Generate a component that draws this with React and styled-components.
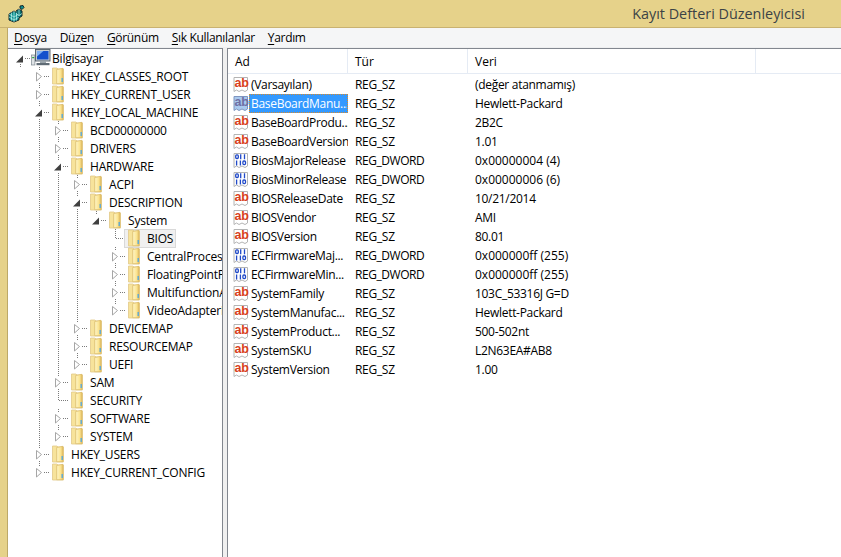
import React from 'react';
import styled, { createGlobalStyle } from 'styled-components';

const Global = createGlobalStyle`
  html, body { margin: 0; padding: 0; background: #e6d28a; }
  body { font-family: "Open Sans", "Noto Sans", "Liberation Sans", sans-serif; }
`;

const Window = styled.div`
  width: 841px; height: 557px; overflow: hidden;
  display: flex; flex-direction: column;
  background: #e6d28a;
`;
const TitleBar = styled.header`
  height: 27px; flex: none; display: flex; align-items: center; justify-content: space-between;
  padding: 0 36px 0 8px; border-bottom: 1px solid #c9b271;
  color: #3b4346; font-size: 14.4px;
`;
const Client = styled.div`
  flex: 1; min-height: 0; margin-left: 7px; display: flex; flex-direction: column;
  background: #f0f0f0; border-left: 1px solid #bda968;
`;
const MenuBar = styled.nav`
  height: 19px; flex: none; display: flex; align-items: center; gap: 13px;
  padding-left: 6px; background: #f5f6f7; color: #000; font-size: 12px; letter-spacing: -0.32px;
  border-bottom: 1px solid #eeeff0;
`;
const MenuItem = styled.span`
  u { text-underline-offset: 2px; text-decoration-thickness: 1px; }
`;
const Panes = styled.div`
  flex: 1; min-height: 0; display: flex; gap: 4px;
`;
const TreePane = styled.div`
  width: 214px; flex: none; background: #fff; overflow: hidden;
  border-top: 1px solid #82878f; border-right: 1px solid #82878f;
`;
const ListPane = styled.div`
  flex: 1; min-width: 0; background: #fff; overflow: hidden;
  border-top: 1px solid #82878f; border-left: 1px solid #82878f;
`;
const TreeRow = styled.div`
  height: 18px; display: flex; align-items: center; padding-left: 4px;
  font-size: 12px; letter-spacing: -0.2px; color: #000; white-space: nowrap;
`;
const TreeLabel = styled.span`
  margin-left: 1px;
`;
const Node = styled.div`
  display: flex; align-items: center; height: 18px;
  ${p => p.$selected && `
    background: #f0f0f0; box-shadow: inset 0 0 0 1px #d9d9d9;
    height: 19px; margin-left: -2px; padding-left: 2px; padding-right: 3px;
  `}
`;
const Header = styled.div`
  height: 24px; display: flex; border-bottom: 1px solid #e5ebf4; background: #fff;
  font-size: 12px; color: #000;
`;
const HeaderCell = styled.div`
  width: ${p => p.$w}px; flex: none; padding-left: 7px; display: flex; align-items: center;
  box-sizing: border-box; border-right: 1px solid #e5ebf4;
`;
const Rows = styled.div`padding-top: 1px;`;
const Row = styled.div`
  height: 19px; display: flex; align-items: center; font-size: 12px; letter-spacing: -0.3px;
  color: #000; white-space: nowrap;
`;
const NameCell = styled.div`
  width: 120px; flex: none; display: flex; align-items: center; padding-left: 5px; box-sizing: border-box;
`;
const Name = styled.span`
  width: 99px; height: 19px; line-height: 17px; box-sizing: border-box; padding: 1px 0 0 2px;
  overflow: hidden; flex: none;
  ${p => p.$selected && `
    background: #3399ff; color: #fff; border: 1px dotted #d98a2b; padding: 0 0 0 1px; line-height: 17px;
  `}
`;
const TypeCell = styled.div`
  width: 120px; flex: none; padding-left: 7px; box-sizing: border-box;
  letter-spacing: ${p => (p.$wide ? '-0.45px' : '-0.3px')};
  margin-top: -1px;
`;
const DataCell = styled.div`
  flex: 1; padding-left: 7px; margin-top: -1px;
  letter-spacing: ${p => (p.$num ? '0' : '-0.3px')};
`;
const IconBox = styled.svg`flex: none; display: block;`;
const IconLetters = styled.text`
  font-family: "Liberation Sans", sans-serif; font-weight: 700; font-size: 12.5px; letter-spacing: -0.2px;
`;

const AppIcon = () => (
  <IconBox width="18" height="18" viewBox="0 0 18 18">
    <path d="M1 9l5-3 5 3v6l-5 2-5-2z" fill="#109090" stroke="#0c1c22" strokeWidth="0.9" />
    <path d="M6 6v11M1 9l5 3 5-3M3.5 7.5v8M8.5 7.5v8M1 12l5 3 5-3" stroke="#bff3ee" strokeWidth="0.7" fill="none" />
    <path d="M8 6l3-2 3 2v5l-3 2" fill="#0d7170" stroke="#0c1c22" strokeWidth="0.9" />
    <path d="M11 4v7M8 8.5l3 2 3-2" stroke="#bff3ee" strokeWidth="0.7" fill="none" />
    <path d="M12 1l3-.5 1 2-2 2-2-1.5z" fill="#109090" stroke="#0c1c22" strokeWidth="0.9" />
  </IconBox>
);

const Folder = ({ id }) => (
  <IconBox width="20" height="18" viewBox="0 0 20 18">
    <defs>
      <linearGradient id={id} x1="0" x2="1" y1="0" y2="0">
        <stop offset="0" stopColor="#fff6c8" />
        <stop offset="0.6" stopColor="#fbe594" />
        <stop offset="1" stopColor="#e6bf62" />
      </linearGradient>
    </defs>
    <path d="M2.5 1h4.5l1 1h5.5v15h-11z" fill="#f7e39b" stroke="#e2c988" strokeWidth="0.8" />
    <path d="M6.7 2.5l6.3-1.2v15.4h-6.3z" fill={`url(#${id})`} stroke="#d8b765" strokeWidth="0.7" />
    <rect x="11.5" y="11" width="1.4" height="4" fill="#58a9da" />
  </IconBox>
);

const Computer = () => (
  <IconBox width="20" height="18" viewBox="0 0 20 18">
    <rect x="0.5" y="6" width="3.4" height="10" fill="#dfe3e6" stroke="#7d8890" strokeWidth="0.7" />
    <rect x="1.2" y="8" width="2" height="1.2" fill="#2fa83f" />
    <rect x="4.5" y="0.5" width="14.5" height="11.5" fill="#c4ccd3" stroke="#4e5a64" strokeWidth="0.9" />
    <rect x="6" y="2" width="11.5" height="8.5" fill="#1450cc" />
    <path d="M6 2h6.5L6 7.5z" fill="#7fb0f2" />
    <rect x="9" y="12" width="6" height="2" fill="#9aa4ab" />
    <rect x="5.5" y="14" width="13" height="2.2" fill="#5f6b75" />
  </IconBox>
);

const Dotted = ({ x1, y1, x2, y2 }) => (
  <line x1={x1} y1={y1} x2={x2} y2={y2} stroke="#7a7a7a" strokeWidth="1" strokeDasharray="1 1" />
);

const Guide = ({ on }) => (
  <IconBox width="19" height="18" viewBox="0 0 19 18">
    {on && <Dotted x1={8.5} y1={0} x2={8.5} y2={18} />}
  </IconBox>
);

const Expander = ({ state, last, root }) => (
  <IconBox width="19" height="18" viewBox="0 0 19 18">
    {!root && <Dotted x1={8.5} y1={0} x2={8.5} y2={state === 'leaf' || last ? 9 : 18} />}
    {root && <Dotted x1={8.5} y1={9} x2={8.5} y2={18} />}
    <Dotted x1={state === 'leaf' ? 9 : 13} y1={9.5} x2={19} y2={9.5} />
    {state !== 'leaf' && <rect x="3" y="3" width="10" height="12" fill="#fff" />}
    {state === 'closed' && <path d="M5.5 5.5l5 4-5 4.5z" fill="#fff" stroke="#a6a6a6" strokeWidth="1" />}
    {state === 'open' && <path d="M4 13.5h7v-7z" fill="#404040" />}
  </IconBox>
);

const S = { o: 'open', c: 'closed', l: 'leaf' };
const tree = [
  ['Bilgisayar', 0, 'o', [], 'pc'],
  ['HKEY_CLASSES_ROOT', 1, 'c', [0]],
  ['HKEY_CURRENT_USER', 1, 'c', [0]],
  ['HKEY_LOCAL_MACHINE', 1, 'o', [0]],
  ['BCD00000000', 2, 'c', [0, 1]],
  ['DRIVERS', 2, 'c', [0, 1]],
  ['HARDWARE', 2, 'o', [0, 1]],
  ['ACPI', 3, 'c', [0, 1, 1]],
  ['DESCRIPTION', 3, 'o', [0, 1, 1]],
  ['System', 4, 'o', [0, 1, 1, 1], 'last'],
  ['BIOS', 5, 'l', [0, 1, 1, 1, 0], 'sel'],
  ['CentralProcessor', 5, 'c', [0, 1, 1, 1, 0]],
  ['FloatingPointProcessor', 5, 'c', [0, 1, 1, 1, 0]],
  ['MultifunctionAdapter', 5, 'c', [0, 1, 1, 1, 0]],
  ['VideoAdapterBusses', 5, 'c', [0, 1, 1, 1, 0], 'last'],
  ['DEVICEMAP', 3, 'c', [0, 1, 1]],
  ['RESOURCEMAP', 3, 'c', [0, 1, 1]],
  ['UEFI', 3, 'c', [0, 1, 1], 'last'],
  ['SAM', 2, 'c', [0, 1]],
  ['SECURITY', 2, 'l', [0, 1]],
  ['SOFTWARE', 2, 'c', [0, 1]],
  ['SYSTEM', 2, 'c', [0, 1], 'last'],
  ['HKEY_USERS', 1, 'c', [0]],
  ['HKEY_CURRENT_CONFIG', 1, 'c', [0], 'last'],
];

const Page = ({ dim }) => (
  <path d="M1 1.5h13.5v12.5l-2.5 1.5-3-1.5-3 1.5-2.5-1.5-2.5 1.5z" fill={dim ? '#a9c9ee' : '#fff'} stroke={dim ? '#7f96c0' : '#b4b4b4'} strokeWidth="1" />
);

const AbIcon = ({ dim }) => (
  <IconBox width="16" height="17" viewBox="0 0 16 17">
    <Page dim={dim} />
    <IconLetters x="1.6" y="11.3" fill={dim ? '#6f6fa4' : '#d8401c'}>ab</IconLetters>
  </IconBox>
);

const BinIcon = () => (
  <IconBox width="16" height="17" viewBox="0 0 16 17">
    <Page />
    <g fill="none" stroke="#2049c8" strokeWidth="1.3">
      <rect x="2.7" y="2.9" width="2.6" height="3.6" rx="1" />
      <path d="M7.7 2.2v5M11.5 2.2v5" />
      <path d="M3.6 8.4v5M7.4 8.4v5" />
      <rect x="9.9" y="9" width="2.6" height="3.6" rx="1" />
    </g>
  </IconBox>
);

const rows = [
  ['(Varsayılan)', 'REG_SZ', '(değer atanmamış)'],
  ['BaseBoardManu...', 'REG_SZ', 'Hewlett-Packard', 'sel'],
  ['BaseBoardProdu...', 'REG_SZ', '2B2C'],
  ['BaseBoardVersion', 'REG_SZ', '1.01'],
  ['BiosMajorRelease', 'REG_DWORD', '0x00000004 (4)'],
  ['BiosMinorRelease', 'REG_DWORD', '0x00000006 (6)'],
  ['BIOSReleaseDate', 'REG_SZ', '10/21/2014'],
  ['BIOSVendor', 'REG_SZ', 'AMI'],
  ['BIOSVersion', 'REG_SZ', '80.01'],
  ['ECFirmwareMaj...', 'REG_DWORD', '0x000000ff (255)'],
  ['ECFirmwareMin...', 'REG_DWORD', '0x000000ff (255)'],
  ['SystemFamily', 'REG_SZ', '103C_53316J G=D'],
  ['SystemManufac...', 'REG_SZ', 'Hewlett-Packard'],
  ['SystemProduct...', 'REG_SZ', '500-502nt'],
  ['SystemSKU', 'REG_SZ', 'L2N63EA#AB8'],
  ['SystemVersion', 'REG_SZ', '1.00'],
];

const menus = [
  ['D', 'osya'], ['', 'Düz', 'e', 'n'], ['G', 'örünüm'], ['S', 'ık Kullanılanlar'], ['Y', 'ardım'],
];

export default function App() {
  return (
    <Window>
      <Global />
      <TitleBar>
        <AppIcon />
        <span>Kayıt Defteri Düzenleyicisi</span>
      </TitleBar>
      <Client>
        <MenuBar>
          {menus.map((m, i) => (
            <MenuItem key={i}>
              {m.length === 2 ? <><u>{m[0]}</u>{m[1]}</> : <>{m[1]}<u>{m[2]}</u>{m[3]}</>}
            </MenuItem>
          ))}
        </MenuBar>
        <Panes>
          <TreePane>
            {tree.map(([label, level, st, guides, flag], i) => (
              <TreeRow key={label}>
                {guides.map((g, j) => <Guide key={j} on={!!g} />)}
                <Expander state={S[st]} last={flag === 'last'} root={level === 0} />
                <Node $selected={flag === 'sel'}>
                  {flag === 'pc' ? <Computer /> : <Folder id={`f${i}`} />}
                  <TreeLabel>{label}</TreeLabel>
                </Node>
              </TreeRow>
            ))}
          </TreePane>
          <ListPane>
            <Header>
              <HeaderCell $w={120}>Ad</HeaderCell>
              <HeaderCell $w={120}>Tür</HeaderCell>
              <HeaderCell $w={288}>Veri</HeaderCell>
            </Header>
            <Rows>
              {rows.map(([n, t, d, f]) => (
                <Row key={n}>
                  <NameCell>
                    {t === 'REG_SZ' ? <AbIcon dim={f === 'sel'} /> : <BinIcon />}
                    <Name $selected={f === 'sel'}>{n}</Name>
                  </NameCell>
                  <TypeCell $wide={t === 'REG_DWORD'}>{t}</TypeCell>
                  <DataCell $num={t === 'REG_DWORD'}>{d}</DataCell>
                </Row>
              ))}
            </Rows>
          </ListPane>
        </Panes>
      </Client>
    </Window>
  );
}
